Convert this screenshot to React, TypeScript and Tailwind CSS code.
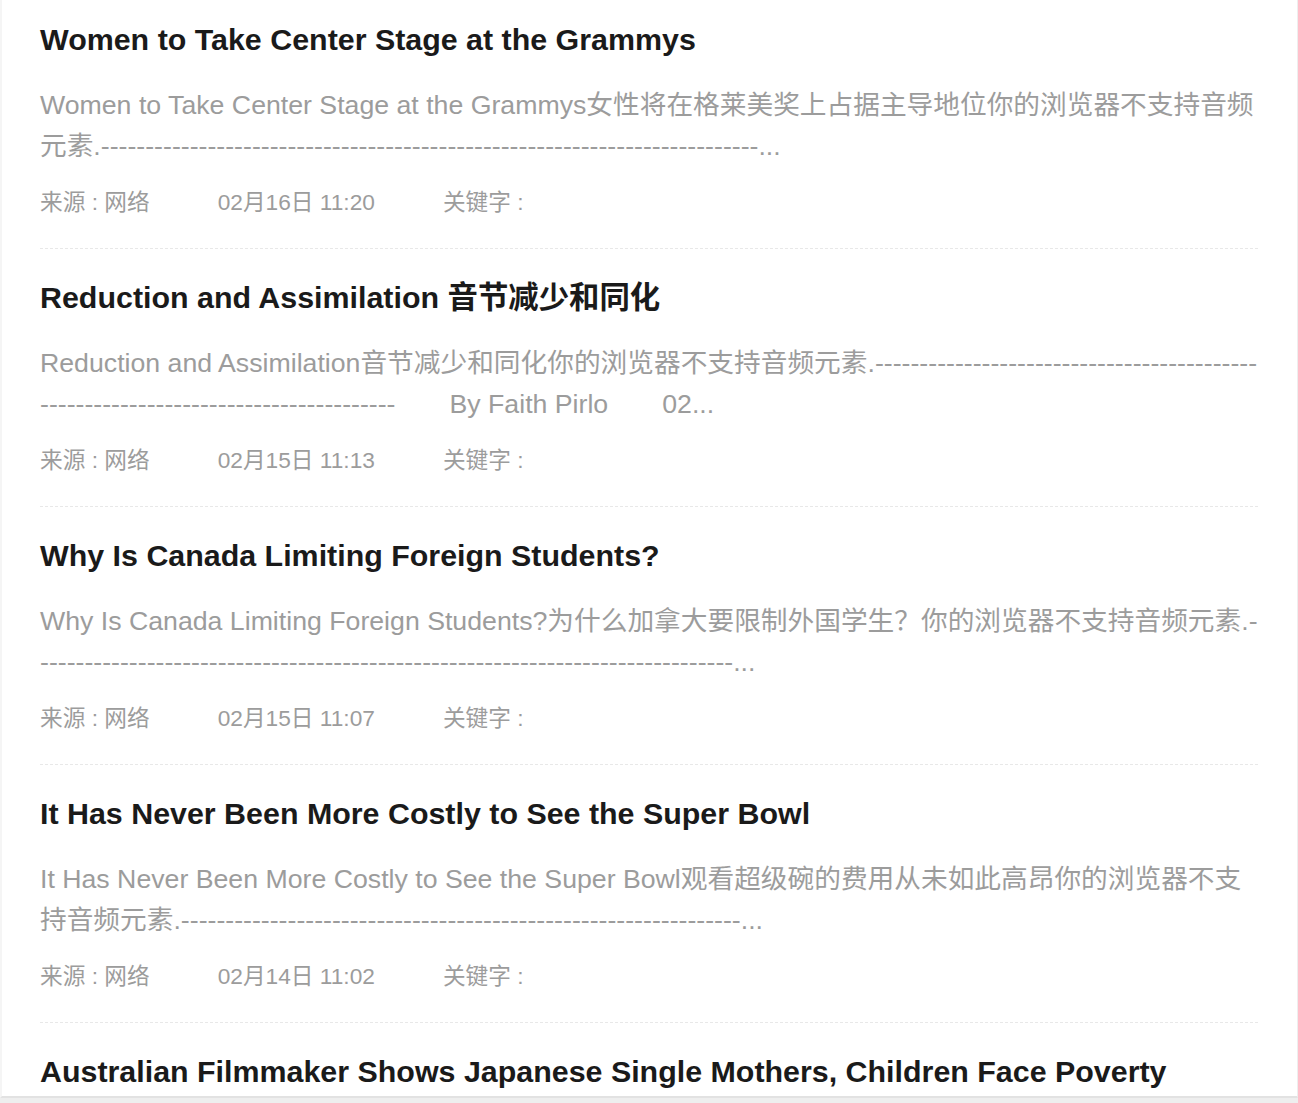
import React from "react";

interface IArticle {
  title: string;
  summary: React.ReactNode;
  date: string;
}

const dashes = (n: number) => "-".repeat(n);

const articles: IArticle[] = [
  {
    title: "Women to Take Center Stage at the Grammys",
    summary: <>Women to Take Center Stage at the Grammys女性将在格莱美奖上占据主导地位你的浏览器不支持音频元素.{dashes(74)}...</>,
    date: "02月16日 11:20",
  },
  {
    title: "Reduction and Assimilation 音节减少和同化",
    summary: (
      <>
        Reduction and Assimilation音节减少和同化你的浏览器不支持音频元素.{dashes(83)}
        <span className="inline-block w-[54px]" />By Faith Pirlo<span className="inline-block w-[54px]" />02...
      </>
    ),
    date: "02月15日 11:13",
  },
  {
    title: "Why Is Canada Limiting Foreign Students?",
    summary: <>Why Is Canada Limiting Foreign Students?为什么加拿大要限制外国学生？你的浏览器不支持音频元素.{dashes(79)}...</>,
    date: "02月15日 11:07",
  },
  {
    title: "It Has Never Been More Costly to See the Super Bowl",
    summary: <>It Has Never Been More Costly to See the Super Bowl观看超级碗的费用从未如此高昂你的浏览器不支持音频元素.{dashes(63)}...</>,
    date: "02月14日 11:02",
  },
  {
    title: "Australian Filmmaker Shows Japanese Single Mothers, Children Face Poverty",
    summary: <>Australian Filmmaker Shows Japanese Single Mothers, Children Face Poverty澳大利亚电影人展示日本单身母亲和孩子面临的贫困你的浏览器不支持音频元素.{dashes(40)}...</>,
    date: "02月13日 11:00",
  },
];

const ArticleItem = ({ title, summary, date }: IArticle) => (
  <div className="pt-[29px] first:pt-[20px] pb-[31px] border-b border-dashed border-[#e8e8e8]">
    <h3 className="text-[30.4px] leading-[38px] font-bold text-[#1a1a1a]">{title}</h3>
    <p className="mt-[27px] text-[26.7px] leading-[41px] text-[#9c9c9c] break-all">{summary}</p>
    <div className="mt-[20px] flex text-[22.7px] leading-[30px] text-[#9c9c9c]">
      <span className="mr-[68px]">来源 : 网络</span>
      <span className="mr-[68px]">{date}</span>
      <span>关键字 :</span>
    </div>
  </div>
);

const App = () => {
  return (
    <div
      className="w-[1298px] h-[1103px] overflow-hidden flex flex-col bg-white"
      style={{ fontFamily: '"Liberation Sans", Arial, "Noto Sans CJK SC", sans-serif' }}
    >
      <div className="flex-1 min-h-0 overflow-hidden border-l-2 border-r border-b-2 border-l-[#f5f5f5] border-r-[#eeeeee] border-b-[#e2e2e2] pl-[38px] pr-[39px]">
        {articles.map((a) => (
          <ArticleItem key={a.title} {...a} />
        ))}
      </div>
      <div className="h-[5px] bg-[#eeeeee]" />
    </div>
  );
};

export default App;
